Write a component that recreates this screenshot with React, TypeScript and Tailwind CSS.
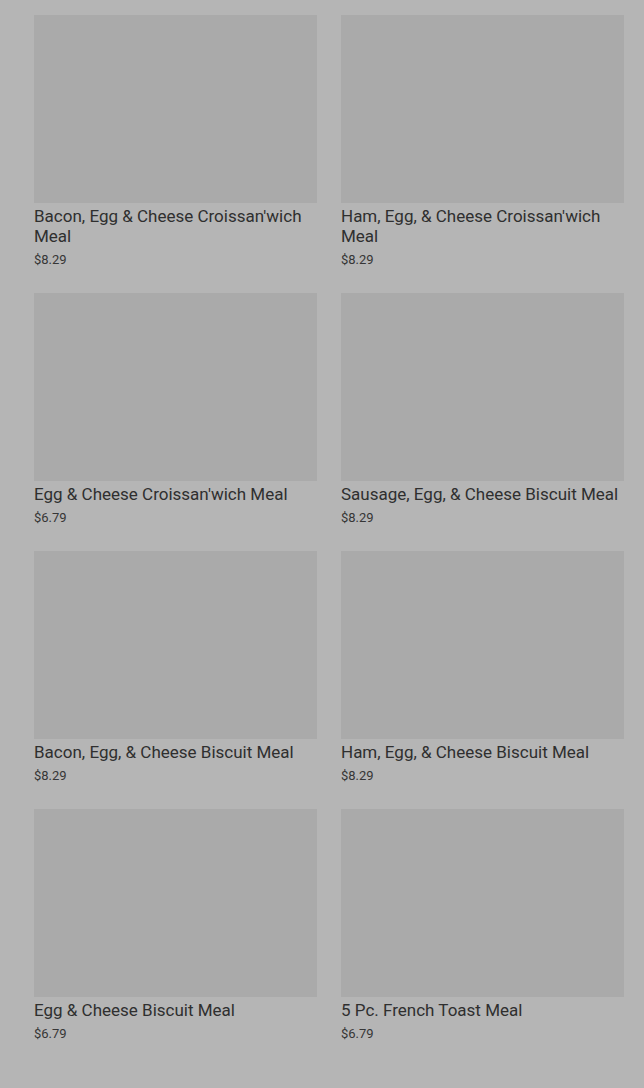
const items = [
  { name: "Bacon, Egg & Cheese Croissan'wich Meal", price: "$8.29" },
  { name: "Ham, Egg, & Cheese Croissan'wich Meal", price: "$8.29" },
  { name: "Egg & Cheese Croissan'wich Meal", price: "$6.79" },
  { name: "Sausage, Egg, & Cheese Biscuit Meal", price: "$8.29" },
  { name: "Bacon, Egg, & Cheese Biscuit Meal", price: "$8.29" },
  { name: "Ham, Egg, & Cheese Biscuit Meal", price: "$8.29" },
  { name: "Egg & Cheese Biscuit Meal", price: "$6.79" },
  { name: "5 Pc. French Toast Meal", price: "$6.79" },
];

function MenuCard({ name, price }: { name: string; price: string }) {
  return (
    <div className="flex flex-col">
      <div className="h-[188px] w-full bg-[#aaaaaa]" />
      <h3 className="mt-[3px] text-[17px] leading-5 text-[#2f2f2f]">{name}</h3>
      <p className="mt-[5px] text-[13px] leading-[18px] text-[#363636]">{price}</p>
    </div>
  );
}

export default function App() {
  return (
    <div className="min-h-[1088px] w-full bg-[#b5b5b5] pl-[34px] pr-[20px] pt-[15px] pb-10 font-['Roboto',sans-serif]">
      <div className="grid grid-cols-2 gap-x-6 gap-y-6">
        {items.map((item) => (
          <MenuCard key={item.name} name={item.name} price={item.price} />
        ))}
      </div>
    </div>
  );
}
